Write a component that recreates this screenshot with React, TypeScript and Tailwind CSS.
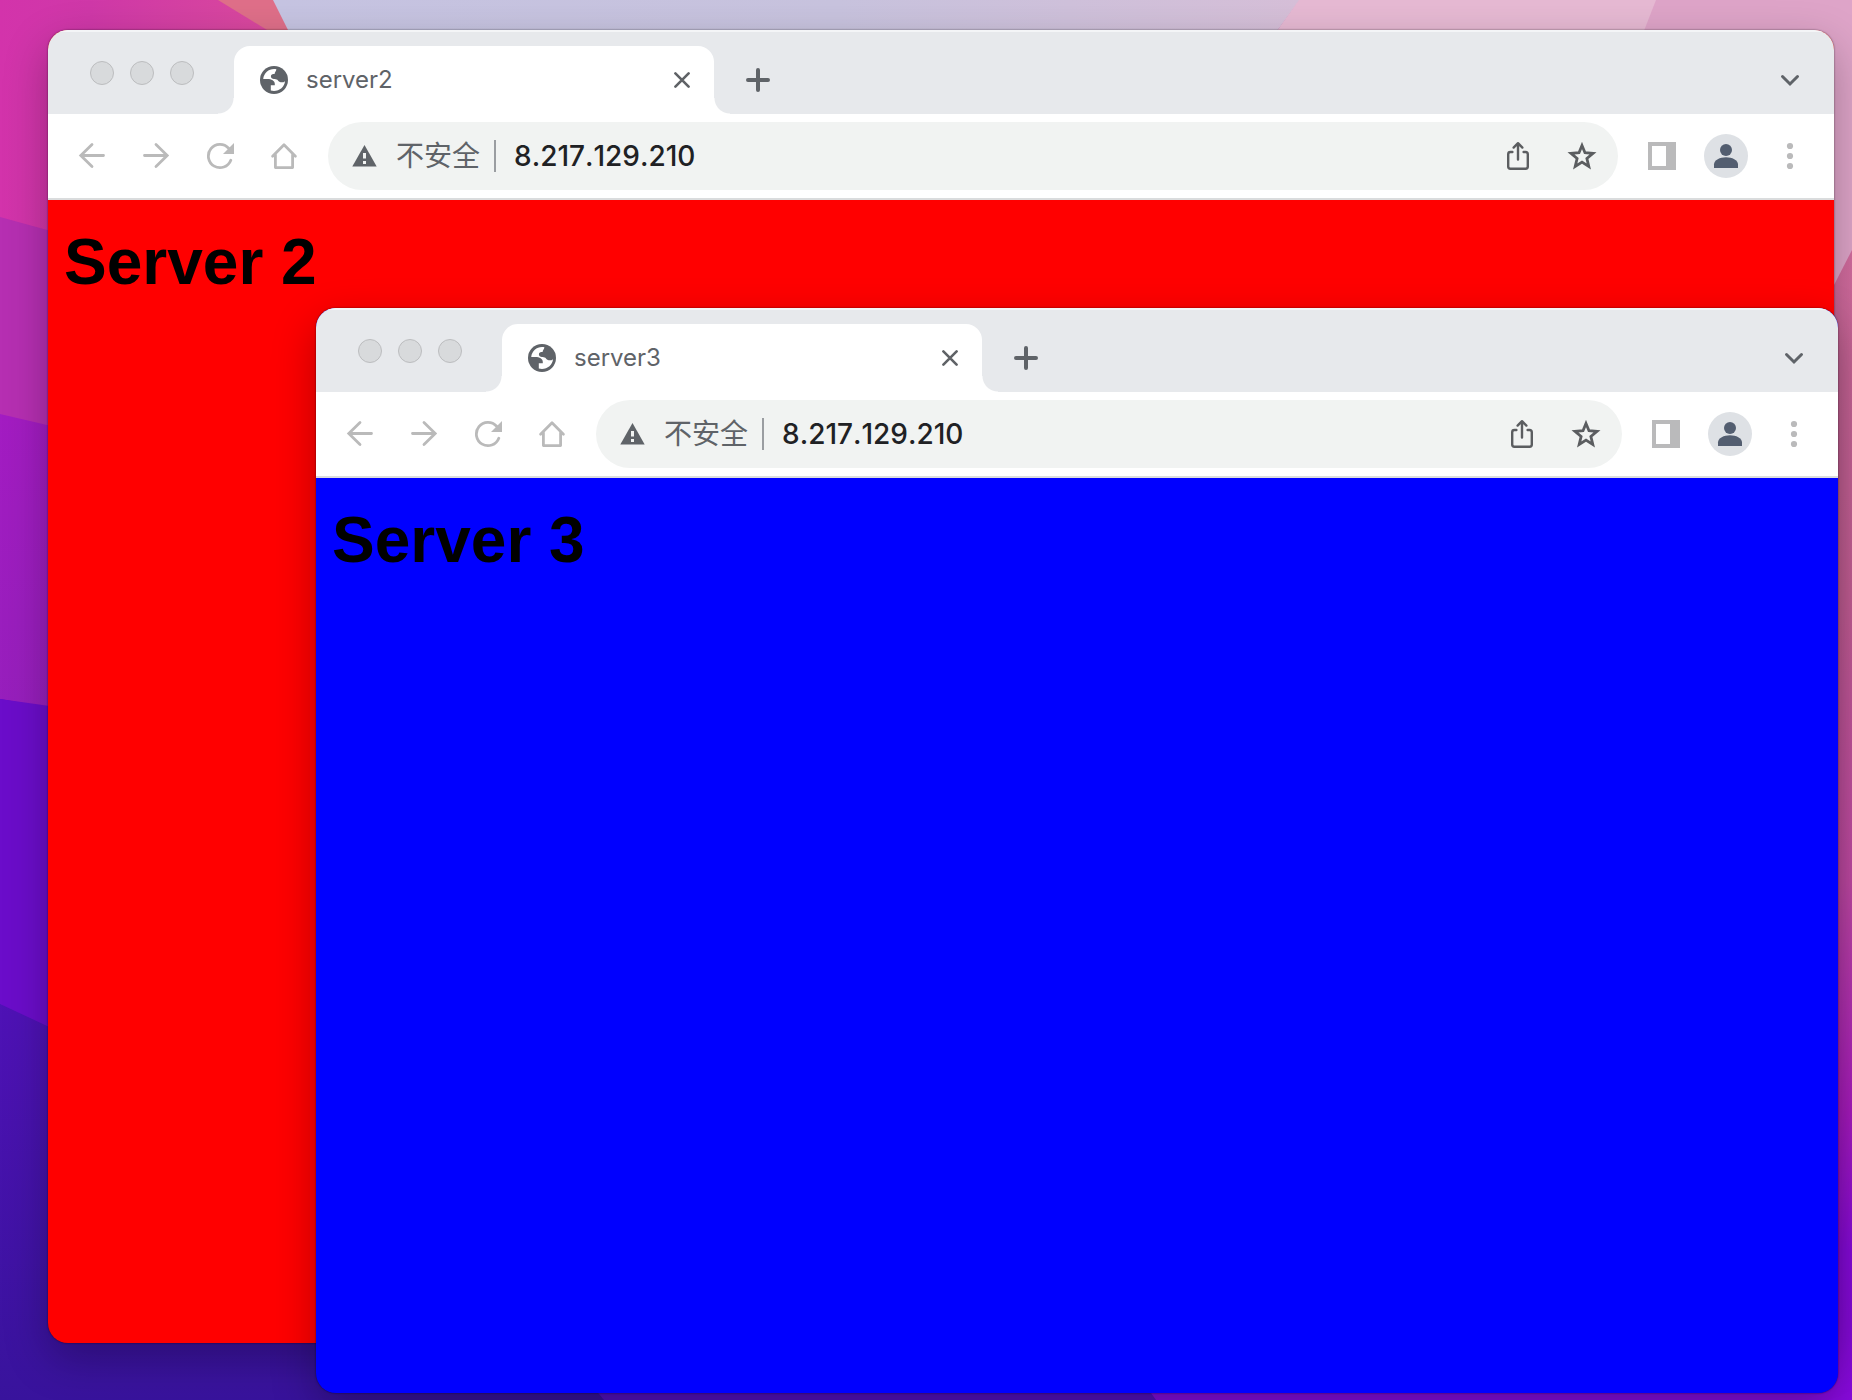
import React from "react";

function Wallpaper() {
  return (
    <svg
      className="absolute inset-0 h-full w-full"
      viewBox="0 0 1852 1400"
      preserveAspectRatio="none"
      aria-hidden="true"
    >
      <defs>
        <linearGradient id="magenta" x1="0" y1="0" x2="1" y2="0">
          <stop offset="0" stopColor="#d333ab" />
          <stop offset="0.3" stopColor="#cf38a8" />
          <stop offset="1" stopColor="#dc4c9c" />
        </linearGradient>
        <linearGradient id="sky" x1="0" y1="0" x2="1" y2="0">
          <stop offset="0" stopColor="#c6c4e2" />
          <stop offset="0.55" stopColor="#c8c3de" />
          <stop offset="1" stopColor="#d6bfd8" />
        </linearGradient>
        <linearGradient id="right" gradientUnits="userSpaceOnUse" x1="0" y1="250" x2="0" y2="1400">
          <stop offset="0" stopColor="#d26c9e" />
          <stop offset="0.3" stopColor="#cc629b" />
          <stop offset="0.55" stopColor="#c94cac" />
          <stop offset="0.75" stopColor="#b01cc8" />
          <stop offset="0.87" stopColor="#8c0ae4" />
          <stop offset="1" stopColor="#8a0ae0" />
        </linearGradient>
        <linearGradient id="violet" x1="0" y1="0" x2="0" y2="1">
          <stop offset="0" stopColor="#a31cc2" />
          <stop offset="1" stopColor="#961fbc" />
        </linearGradient>
        <linearGradient id="indigo" gradientUnits="userSpaceOnUse" x1="0" y1="1000" x2="0" y2="1400">
          <stop offset="0" stopColor="#4f12b6" />
          <stop offset="1" stopColor="#38139c" />
        </linearGradient>
      </defs>
      <rect width="1852" height="1400" fill="url(#indigo)" />
      <path d="M0 0H300V300H0Z" fill="url(#magenta)" />
      <path d="M0 217L120 250V460L0 416Z" fill="#b62fb2" />
      <path d="M0 414L120 442V720L0 699Z" fill="url(#violet)" />
      <path d="M0 699L120 716V1060L0 1004Z" fill="#6b0dca" />
      <path d="M218 0H300V50H300Z" fill="#df6f89" />
      <path d="M273 0H1300L1260 54H300Z" fill="url(#sky)" />
      <path d="M1299 0H1660L1640 54H1260Z" fill="#e6b9d3" />
      <path d="M1656 0H1852V400H1500Z" fill="#dea4c8" />
      <path d="M1852 250L1780 390V1400H1852Z" fill="url(#right)" />
      <path d="M594 1388L604 1400H1160L1146 1388Z" fill="#5410c0" />
      <path d="M1146 1386L1156 1400H1820V1386Z" fill="#860de0" />
    </svg>
  );
}

function GlobeIcon() {
  return (
    <svg viewBox="0 0 28 28" className="size-7 shrink-0" aria-hidden="true">
      <circle cx="14" cy="14" r="14" fill="#5f6368" />
      <path
        d="M16.400 3.300C10 1.900 4 6.200 3.200 13H7.500C11.400 13 14.800 14.600 14.800 17.900V19.200H10.800V24.500C17.800 26.500 24.500 21.500 25 15.200C23.400 16.600 21 16.700 19.400 15.700C18.200 15 17.800 13.600 16.600 13.400C14.400 13.100 11 13.200 10.900 10.600C10.800 8.500 12.400 8 14.600 8C14.700 5.800 16.100 5.800 16.400 3.300Z"
        fill="#fff"
      />
    </svg>
  );
}

function CloseIcon() {
  return (
    <svg viewBox="0 0 16 16" className="size-4" fill="none" stroke="#606367" strokeWidth="2.600" strokeLinecap="round" aria-hidden="true">
      <path d="M1.400 1.400L14.600 14.600M14.600 1.400L1.400 14.600" />
    </svg>
  );
}

function PlusIcon() {
  return (
    <svg viewBox="0 0 24 24" className="size-6" fill="none" stroke="#5f6368" strokeWidth="4" strokeLinecap="round" aria-hidden="true">
      <path d="M12 2V22M2 12H22" />
    </svg>
  );
}

function ChevronIcon() {
  return (
    <svg viewBox="0 0 20 14" className="h-[14px] w-5" fill="none" stroke="#5f6368" strokeWidth="3" strokeLinecap="round" aria-hidden="true">
      <path d="M2.500 3.500L10 11L17.500 3.500" />
    </svg>
  );
}

function BackIcon() {
  return (
    <svg viewBox="0 0 28 28" className="size-7" fill="none" stroke="#bababa" strokeWidth="2.800" strokeLinecap="round" strokeLinejoin="miter" aria-hidden="true">
      <path d="M25.500 13.500H3M14 2.500L2.800 13.500L14 24.500" />
    </svg>
  );
}

function ForwardIcon() {
  return (
    <svg viewBox="0 0 28 28" className="size-7" fill="none" stroke="#bababa" strokeWidth="2.800" strokeLinecap="round" aria-hidden="true">
      <path d="M2.500 13.500H25M14 2.500L25.200 13.500L14 24.500" />
    </svg>
  );
}

function ReloadIcon() {
  return (
    <svg viewBox="0 0 28 28" className="size-7" aria-hidden="true">
      <path
        d="M24.800 18.200A11.600 11.600 0 1 1 22.600 6.300"
        fill="none"
        stroke="#bababa"
        strokeWidth="2.800"
        strokeLinecap="round"
      />
      <path d="M28 1V12H17Z" fill="#bababa" />
    </svg>
  );
}

function HomeIcon() {
  return (
    <svg viewBox="0 0 28 28" className="size-7" fill="none" stroke="#bababa" strokeWidth="2.800" strokeLinecap="round" strokeLinejoin="round" aria-hidden="true">
      <path d="M2.600 14.200L14 2.800L25.400 14.200M5.400 12.500V25.600H22.600V12.500" />
    </svg>
  );
}

function WarningIcon() {
  return (
    <svg viewBox="0 0 26 24" className="h-6 w-[26px] shrink-0" aria-hidden="true">
      <path d="M12.500 1L24.700 22.500H0.300Z" fill="#5f6368" />
      <path d="M11 9H14V14.500H11ZM11 17H14V20H11Z" fill="#f1f3f2" />
    </svg>
  );
}

function ShareIcon() {
  return (
    <svg viewBox="0 0 28 32" className="h-8 w-7" fill="none" stroke="#5b5d60" strokeWidth="2.400" strokeLinecap="round" strokeLinejoin="round" aria-hidden="true">
      <path d="M14 19.500V4M9.600 7.600L14 3.200L18.400 7.600" />
      <path d="M8.400 12H6.400Q4.200 12 4.200 14.200V26.600Q4.200 28.800 6.400 28.800H21.600Q23.800 28.800 23.800 26.600V14.200Q23.800 12 21.600 12H19.600" />
    </svg>
  );
}

function StarIcon() {
  return (
    <svg viewBox="0 0 30 30" className="size-[30px]" fill="none" stroke="#5b5d60" strokeWidth="2.800" strokeLinejoin="miter" aria-hidden="true">
      <path d="M15 4.500L18 11.700L26 12.400L19.900 17.500L21.800 25.400L15 21.100L8.200 25.400L10.100 17.500L4 12.400L12 11.700Z" />
    </svg>
  );
}

function SidePanelIcon() {
  return (
    <svg viewBox="0 0 28 28" className="size-7" aria-hidden="true">
      <path d="M0 0H28V28H0ZM4 4V24H18V4Z" fillRule="evenodd" fill="#bababb" />
    </svg>
  );
}

function AvatarIcon() {
  return (
    <svg viewBox="0 0 44 44" className="size-11" aria-hidden="true">
      <circle cx="22" cy="22" r="22" fill="#dee1e5" />
      <circle cx="22" cy="16" r="6" fill="#535e70" />
      <path d="M10 34V30.500C10 26 16 23.200 22 23.200S34 26 34 30.500V34Z" fill="#535e70" />
    </svg>
  );
}

function MenuIcon() {
  return (
    <svg viewBox="0 0 28 28" className="size-7" fill="#bababb" aria-hidden="true">
      <circle cx="14" cy="4" r="3.100" />
      <circle cx="14" cy="14" r="3.100" />
      <circle cx="14" cy="24" r="3.100" />
    </svg>
  );
}

function ToolButton({ label, children }: { label: string; children: React.ReactNode }) {
  return (
    <button type="button" aria-label={label} className="flex size-16 shrink-0 items-center justify-center">
      {children}
    </button>
  );
}

function TrafficLights() {
  return (
    <div className="flex w-[186px] shrink-0 gap-4 pt-[15px] pl-[42px]">
      {["Close window", "Minimize window", "Zoom window"].map((label) => (
        <button
          key={label}
          type="button"
          aria-label={label}
          className="size-6 rounded-full border border-[#bcbdbf] bg-[#d8dadc]"
        />
      ))}
    </div>
  );
}

function BrowserWindow({
  title,
  heading,
  page,
  place,
}: {
  title: string;
  heading: string;
  page: string;
  place: string;
}) {
  return (
    <section
      aria-label={title}
      className={`absolute flex flex-col overflow-hidden rounded-[20px] shadow-[0_0_2px_rgba(0,0,0,0.6),0_16px_44px_rgba(0,0,0,0.28)] ${page} ${place}`}
    >
      <header className="flex h-[84px] shrink-0 border-t-2 border-[#f4f5f7] bg-[#e7e9ec] pt-[14px]">
        <TrafficLights />
        <div className="relative flex w-[480px] items-center rounded-t-2xl bg-white pr-6 pl-[26px] before:absolute before:bottom-0 before:-left-4 before:size-4 before:bg-[radial-gradient(circle_at_0_0,transparent_15px,white_16px)] after:absolute after:-right-4 after:bottom-0 after:size-4 after:bg-[radial-gradient(circle_at_100%_0,transparent_15px,white_16px)]">
          <GlobeIcon />
          <span className="ml-[18px] flex-1 text-2xl text-[#5f6368]">{title}</span>
          <button type="button" aria-label="Close tab" className="flex size-4 items-center justify-center">
            <CloseIcon />
          </button>
        </div>
        <button type="button" aria-label="New tab" className="ml-3 flex w-16 items-center justify-center">
          <PlusIcon />
        </button>
        <button type="button" aria-label="Search tabs" className="mr-3 ml-auto flex w-16 items-center justify-center">
          <ChevronIcon />
        </button>
      </header>

      <div className="flex h-[86px] shrink-0 items-center border-b-2 border-[#dadcdd] bg-white px-3">
        <ToolButton label="Back"><BackIcon /></ToolButton>
        <ToolButton label="Forward"><ForwardIcon /></ToolButton>
        <ToolButton label="Reload"><ReloadIcon /></ToolButton>
        <ToolButton label="Home"><HomeIcon /></ToolButton>
        <div className="mx-3 flex h-[68px] min-w-0 flex-1 items-center rounded-full bg-[#f1f3f2] pr-1 pl-6">
          <WarningIcon />
          <span className="ml-[18px] shrink-0 text-[28px] leading-8 text-[#5f6368]">不安全</span>
          <span className="mx-[14px] h-8 w-0.5 shrink-0 bg-[#9a9da1]" />
          <input
            aria-label="Address"
            defaultValue="8.217.129.210"
            className="h-10 min-w-0 flex-1 bg-transparent pl-1 text-[28px] font-medium text-[#202124] outline-none [font-kerning:none]"
          />
          <ToolButton label="Share"><ShareIcon /></ToolButton>
          <ToolButton label="Bookmark"><StarIcon /></ToolButton>
        </div>
        <ToolButton label="Side panel"><SidePanelIcon /></ToolButton>
        <ToolButton label="Profile"><AvatarIcon /></ToolButton>
        <ToolButton label="Menu"><MenuIcon /></ToolButton>
      </div>

      <main className="flex-1 px-4 pt-6">
        <h1 className="font-['Liberation_Sans',sans-serif] text-[64px] leading-[76px] font-bold text-black">
          {heading}
        </h1>
      </main>
    </section>
  );
}

export default function App() {
  return (
    <div className="relative h-screen overflow-hidden font-['Inter','Noto_Sans_CJK_SC',sans-serif]">
      <Wallpaper />
      <BrowserWindow
        title="server2"
        heading="Server 2"
        page="bg-[#ff0000]"
        place="top-[30px] right-[18px] bottom-[57px] left-12"
      />
      <BrowserWindow
        title="server3"
        heading="Server 3"
        page="bg-[#0000ff]"
        place="top-[308px] right-[14px] bottom-[7px] left-[316px]"
      />
    </div>
  );
}
